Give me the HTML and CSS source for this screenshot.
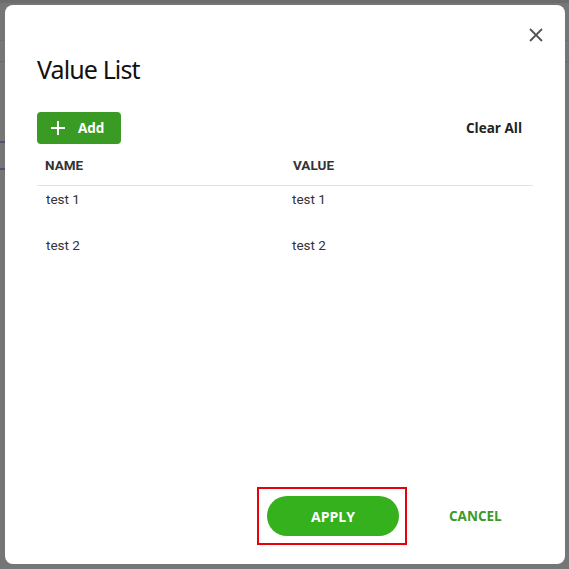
FILE: index.html
```html
<!DOCTYPE html>
<html>
<head>
<meta charset="utf-8">
<link rel="stylesheet" href="styles.css">
</head>
<body>
<div class="page">
  <div class="topbar"></div>
  <div class="subbar"></div>
  <div class="gap"></div>
  <div class="accent"></div>
  <div class="row-band"></div>
  <div class="accent"></div>
</div>
<div class="overlay">
  <div class="dialog">
    <div class="dlg-head">
      <button class="close" aria-label="Close">
        <svg width="14" height="14" viewBox="0 0 14 14"><path d="M1 1L13 13M13 1L1 13" stroke="#555" stroke-width="1.8" fill="none"/></svg>
      </button>
    </div>
    <h1 class="title">Value List</h1>
    <div class="toolbar">
      <button class="add-btn">
        <svg width="14" height="14" viewBox="0 0 14 14"><path d="M7 0V14M0 7H14" stroke="#fff" stroke-width="2" fill="none"/></svg>
        <span>Add</span>
      </button>
      <button class="clear-btn">Clear All</button>
    </div>
    <div class="table">
      <div class="thead">
        <div class="cell">NAME</div>
        <div class="cell">VALUE</div>
      </div>
      <div class="trow">
        <div class="cell">test 1</div>
        <div class="cell">test 1</div>
      </div>
      <div class="trow">
        <div class="cell">test 2</div>
        <div class="cell">test 2</div>
      </div>
    </div>
    <div class="footer">
      <div class="highlight">
        <button class="apply">APPLY</button>
      </div>
      <button class="cancel">CANCEL</button>
    </div>
  </div>
</div>
</body>
</html>
```
FILE: styles.css
```css
* { box-sizing: border-box; }
html, body { margin: 0; padding: 0; }
body {
  width: 569px;
  height: 569px;
  overflow: hidden;
  background: #767676;
  font-family: "Open Sans", "Noto Sans", sans-serif;
}
.page { display: flex; flex-direction: column; }
.topbar { height: 41px; border-top: 3px solid #6c6c6c; border-bottom: 1px solid #6e6e6e; }
.subbar { height: 21px; border-bottom: 1px solid #6a6a6a; }
.gap { height: 79px; }
.accent { height: 2px; width: 200px; background: #5b4a73; }
.row-band { height: 25px; }

.overlay {
  position: fixed;
  inset: 0;
  padding: 5px 4px 5px 5px;
}
.dialog {
  width: 560px;
  height: 559px;
  background: #fff;
  border-radius: 8px;
  padding: 0 32px;
  display: flex;
  flex-direction: column;
}
.dlg-head {
  display: flex;
  justify-content: flex-end;
  padding-top: 18px;
  margin-right: -15px;
}
.close {
  border: 0;
  background: none;
  padding: 0;
  width: 24px;
  height: 24px;
  display: flex;
  align-items: center;
  justify-content: center;
}
.title {
  margin: 0;
  margin-top: 4px;
  font-family: "Noto Sans", "Open Sans", sans-serif;
  font-weight: 400;
  font-size: 25px;
  line-height: 36px;
  color: #111;
  letter-spacing: -0.9px;
}
.toolbar {
  margin-top: 25px;
  display: flex;
  justify-content: space-between;
  align-items: center;
}
.add-btn {
  width: 84px;
  height: 32px;
  border: 0;
  border-radius: 4px;
  background: #3a9b24;
  color: #fff;
  display: flex;
  align-items: center;
  gap: 13px;
  padding: 0 0 0 14px;
  font-family: "Open Sans", sans-serif;
  font-weight: 700;
  font-size: 13.5px;
}
.clear-btn {
  border: 0;
  background: none;
  padding: 0 11px 0 0;
  font-family: "Open Sans", sans-serif;
  font-weight: 700;
  font-size: 13.5px;
  color: #222;
}
.table { display: flex; flex-direction: column; }
.thead, .trow {
  display: grid;
  grid-template-columns: 1fr 1fr;
  font-family: Roboto, sans-serif;
  color: #333;
}
.thead {
  height: 42px;
  align-items: center;
  border-bottom: 1px solid #e3e3e3;
  font-weight: 700;
  font-size: 13.5px;
}
.thead .cell { padding-left: 8px; }
.trow {
  height: 46px;
  align-items: start;
  padding-top: 5px;
  font-size: 13.5px;
  line-height: 16px;
}
.trow .cell { padding-left: 9px; }
.trow .cell + .cell { padding-left: 7px; }

.footer {
  margin-top: auto;
  margin-bottom: 19px;
  display: flex;
  align-items: center;
  padding-left: 220px;
}
.highlight {
  border: 2px solid #e8000b;
  padding: 7px 6px 7px 8px;
}
.apply {
  width: 132px;
  height: 40px;
  border: 0;
  border-radius: 20px;
  background: #34b11c;
  color: #fff;
  font-family: "Open Sans", sans-serif;
  font-weight: 700;
  font-size: 14px;
}
.cancel {
  margin-left: 42px;
  border: 0;
  background: none;
  padding: 0;
  color: #3c9a28;
  font-family: "Open Sans", sans-serif;
  font-weight: 700;
  font-size: 13.5px;
}
```
